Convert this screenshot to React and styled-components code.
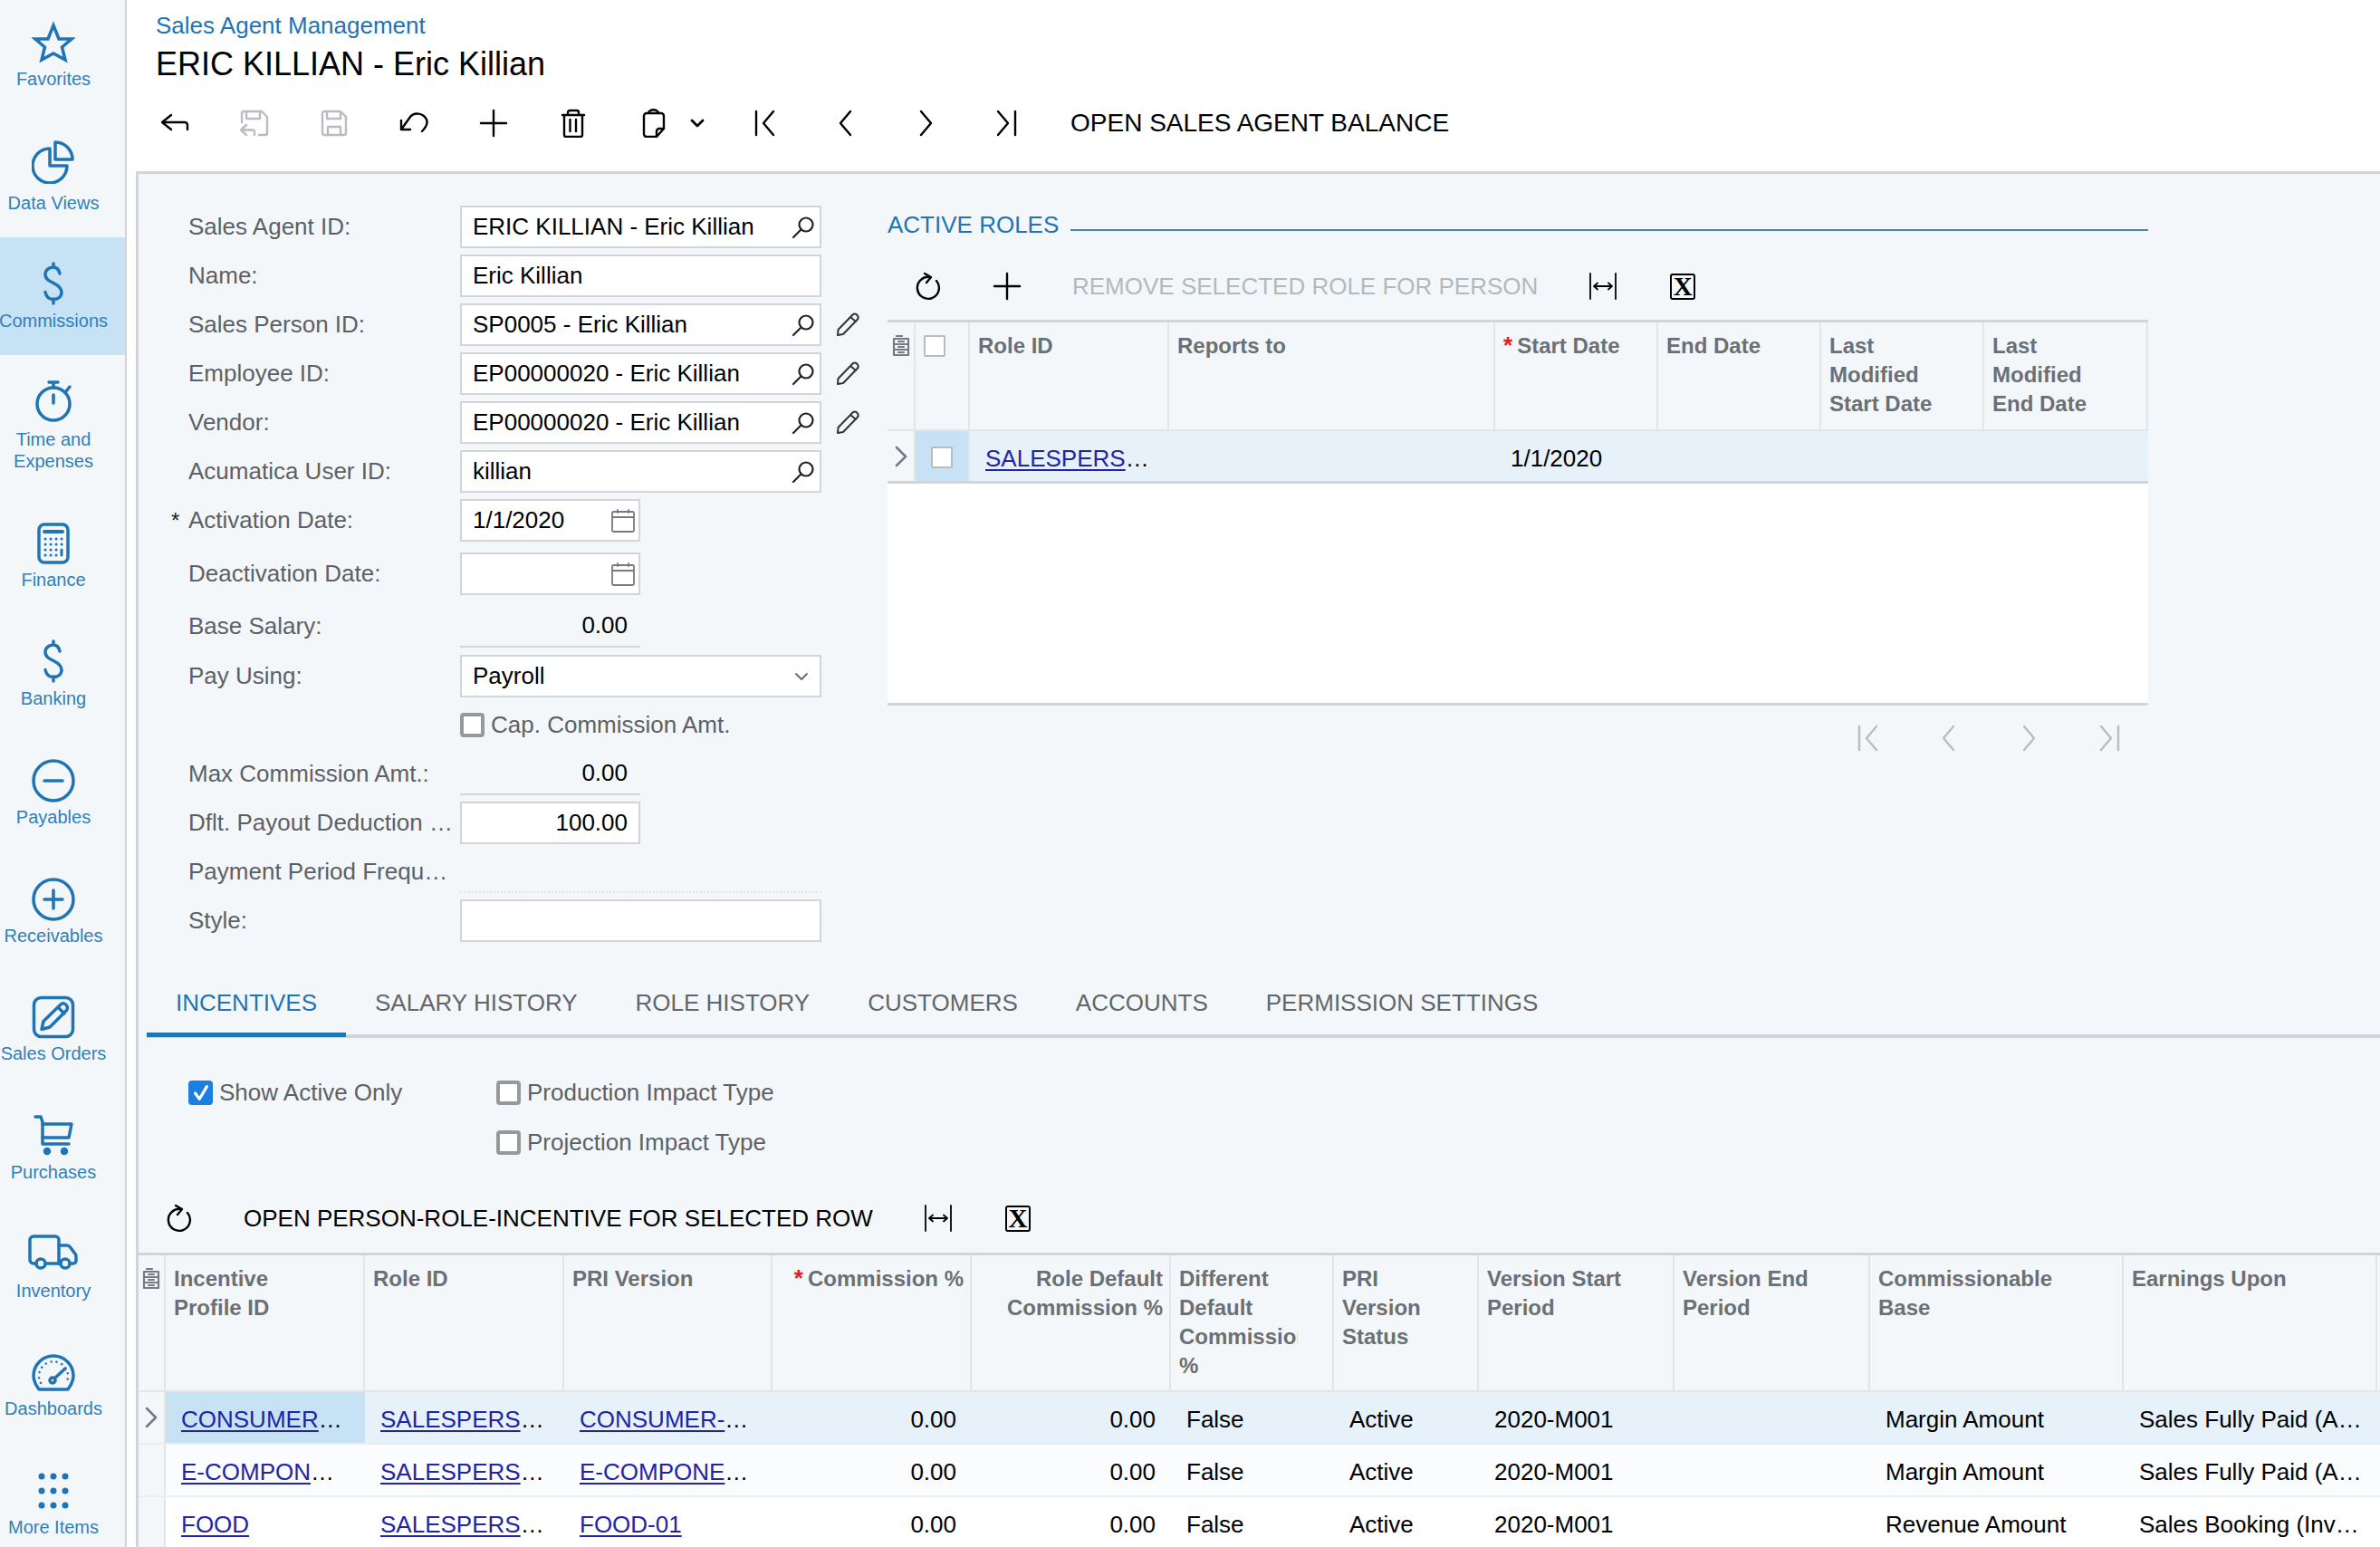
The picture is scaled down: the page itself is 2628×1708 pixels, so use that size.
import React from 'react';
import styled, { createGlobalStyle } from 'styled-components';

const BLUE = '#1f74b5';
const LINE = '#d2d4d9';
const PANEL = '#f4f7f9';

const Global = createGlobalStyle`
  html, body { margin: 0; padding: 0; background: #fff; overflow: hidden; }
  * { box-sizing: border-box; }
  body { font-family: "Liberation Sans", Arial, sans-serif; font-size: 26px; color: #000; }
`;

const Page = styled.div`display: flex; width: 2628px; height: 1708px; overflow: hidden; background: #fff;`;
const Sidebar = styled.nav`width: 140px; flex: none; height: 1708px; background: ${PANEL}; border-right: 2px solid ${LINE}; overflow: hidden;`;
const NavItem = styled.div`
  height: ${p => p.$h}px; display: flex; flex-direction: column; align-items: center; justify-content: flex-end;
  padding: 0 20px 26px 0; background: ${p => (p.$active ? '#c8e2f5' : 'transparent')};
`;
const NavIcon = styled.svg`
  display: block; flex: none; height: 48px; width: ${p => p.$w || 48}px; margin-bottom: ${p => p.$gap ?? 4}px;
  fill: none; color: ${BLUE}; stroke: ${BLUE}; stroke-width: 3.5; stroke-linecap: round; stroke-linejoin: round;
`;
const NavLabel = styled.div`font-size: 20px; line-height: 24px; color: #2f80bb; text-align: center; white-space: nowrap;`;

const Main = styled.main`flex: 1; min-width: 0; padding-left: 10px; display: flex; flex-direction: column;`;
const Header = styled.header`height: 189px; flex: none; padding-top: 12px;`;
const Crumb = styled.div`padding-left: 22px; font-size: 26px; line-height: 32px; color: ${BLUE};`;
const Title = styled.h1`margin: 5px 0 11px; padding-left: 22px; font-size: 36px; font-weight: 400; line-height: 44px;`;
const Toolbar = styled.div`display: flex; align-items: center; height: 64px; margin-left: ${p => p.$ml || 0}px;`;
const ToolIcon = styled.button`
  all: unset; box-sizing: border-box; display: flex; align-items: center; justify-content: center; flex: none;
  width: ${p => p.$w || 88}px; height: 64px; gap: ${p => p.$gap || 0}px; padding-left: ${p => p.$pl || 0}px;
  color: ${p => (p.$off ? '#b9bcc0' : '#000')};
`;
const ToolText = styled.div`
  padding: 0 28px; font-size: ${p => (p.$lg ? 28 : 26)}px; white-space: nowrap; color: ${p => (p.$off ? '#b5b8bb' : '#000')};
`;
const Glyph = styled.svg`
  display: block; flex: none; width: ${p => p.$s || 32}px; height: ${p => p.$h || p.$s || 32}px; fill: none; stroke: currentColor;
  stroke-width: ${p => p.$sw || 2.4}; stroke-linecap: round; stroke-linejoin: round;
`;
const ExcelBox = styled.span`
  display: flex; align-items: center; justify-content: center; width: 28px; height: 29px; border: 2px solid #000; border-radius: 3px;
  font-family: "Liberation Serif", serif; font-weight: 700; font-size: 29px; line-height: 1;
`;

const Panel = styled.section`flex: 1; min-height: 0; background: ${PANEL}; border-top: 3px solid ${LINE}; border-left: 3px solid ${LINE};`;
const Upper = styled.div`display: flex; height: 882px;`;
const Form = styled.div`width: 827px; flex: none; padding: 31px 0 0 55px;`;
const Row = styled.div`display: flex; align-items: center; height: 54px; margin-top: ${p => p.$mt || 0}px;`;
const Label = styled.label`
  width: 292px; margin-right: 8px; padding-top: 1px; flex: none; color: #5c6166; white-space: nowrap; overflow: hidden; text-overflow: ellipsis; font-size: 26px;
`;
const RequiredLabel = styled(Label)`overflow: visible;`;
const Req = styled.span`display: inline-block; width: 19px; margin-left: -19px; color: #222; font-size: 24px;`;
const InputBox = styled.div`
  display: flex; align-items: center; height: 47px; width: ${p => p.$w || 399}px; padding: 1px 12px 0; flex: none;
  background: #fff; border: 2.5px solid ${LINE}; justify-content: ${p => (p.$right ? 'flex-end' : 'space-between')};
`;
const IconSlot = styled.span`display: flex; flex: none; margin-right: ${p => p.$mr || 0}px; color: ${p => p.$color || 'inherit'};`;
const ReadBox = styled.div`
  display: flex; align-items: center; justify-content: flex-end; height: 47px; width: ${p => p.$w || 199}px; padding: 1px 14px 0; flex: none;
  border-bottom: ${p => (p.$dotted ? `2px dotted #e3e5e8` : `2.5px solid ${LINE}`)};
`;
const SideEdit = styled.span`display: flex; margin-left: 15px; color: #333;`;
const CheckLabel = styled.label`display: flex; align-items: center; gap: 7px; color: #5c6166; white-space: nowrap;`;
const Check = styled.span`
  display: flex; align-items: center; justify-content: center; width: ${p => p.$s || 27}px; height: ${p => p.$s || 27}px; flex: none; border-radius: ${p => (p.$thin ? 2 : 4)}px;
  background: ${p => (p.$on ? '#1a7fe0' : '#fff')}; border: ${p => (p.$on ? 'none' : `${p.$thin ? 2.5 : 4}px solid ${p.$thin ? '#b8bbbf' : '#95989d'}`)};
  color: #fff;
`;

const Roles = styled.div`width: 1392px; flex: none; padding-top: 40px;`;
const SectionHead = styled.div`display: flex; align-items: center; gap: 13px; height: 32px; margin-bottom: 20px;`;
const SectionTitle = styled.div`color: ${BLUE}; white-space: nowrap; font-size: 26px;`;
const SectionRule = styled.div`flex: 1; height: 2.5px; margin-top: 12px; background: #4a86ab;`;
const GridWrap = styled.div`margin-top: ${p => p.$mt ?? 5}px; border-top: 3px solid ${LINE};`;
const GridRow = styled.div`
  display: grid; grid-template-columns: ${p => p.$cols}; height: ${p => p.$h}px;
  background: ${p => p.$bg || 'transparent'}; border-bottom: ${p => p.$bw || 2}px solid ${p => p.$bc || '#e6e9ec'};
`;
const HeadCell = styled.div`
  padding: 10px ${p => (p.$right ? 7 : 38)}px 0 9px; border-right: 2px solid #e3e6e9; min-width: 0;
  text-align: ${p => (p.$right ? 'right' : 'left')}; font-size: 24px; font-weight: 700; line-height: 32px; color: #6b7075;
`;
const HeadText = styled.div`overflow: hidden;`;
const GutterCell = styled.div`
  display: flex; justify-content: center; padding-top: ${p => p.$top ?? 0}px; align-items: ${p => (p.$top !== undefined ? 'flex-start' : 'center')};
  border-right: 2px solid #e3e6e9; color: #777b80; background: ${PANEL};
`;
const CheckCell = styled.div`
  display: flex; justify-content: ${p => (p.$head ? 'flex-start' : 'center')}; align-items: ${p => (p.$head ? 'flex-start' : 'center')};
  padding: ${p => (p.$head ? '14px 0 0 9px' : '3px 0 0')};
  background: ${p => (p.$sel ? '#c8e2f5' : 'transparent')}; border-right: 2px solid #e3e6e9;
`;
const Star = styled.span`color: #e02020; margin-right: 5px; font-size: 26px; line-height: 24px;`;
const Cell = styled.div`
  display: block; min-width: 0; padding: 0 17px; line-height: 60px; font-size: 26px; white-space: nowrap; overflow: hidden; text-overflow: ellipsis;
  text-align: ${p => (p.$right ? 'right' : 'left')}; background: ${p => (p.$sel ? '#c8e2f5' : 'transparent')};
`;
const GridLink = styled.a`color: #2323a8; text-decoration: underline; text-underline-offset: 3px;`;
const EmptyArea = styled.div`height: 245px; background: #fff; border-bottom: 3px solid ${LINE};`;
const Pager = styled.div`display: flex; justify-content: flex-end; height: 64px; margin-top: 4px;`;

const TabBar = styled.div`display: flex; height: 72px; margin-left: 9px; border-bottom: 4px solid ${LINE};`;
const Tab = styled.div`
  display: flex; align-items: center; height: 71px; padding: 0 32px; margin-bottom: -4px; white-space: nowrap; font-size: 26px;
  color: ${p => (p.$active ? BLUE : '#62666b')}; border-bottom: 5px solid ${p => (p.$active ? BLUE : 'transparent')};
`;
const Filters = styled.div`display: flex; padding: 33px 0 0 55px; height: 167px;`;
const FilterCol = styled.div`width: ${p => p.$w || 'auto'}; flex: none;`;
const FilterRow = styled.div`display: flex; align-items: center; height: 55px;`;

const CabinetIcon = () => (
  <Glyph viewBox="0 0 20 24" $s={20} $h={24} $sw={2.2}>
    <path d="M5 1h6M2 4h16v18H2zM2 10h16M2 16h16M7 7h6M7 13h6M7 19h6" />
  </Glyph>
);
const Chevron = () => (
  <Glyph viewBox="0 0 24 24" $s={24} $sw={2.6}><path d="M7 2l10 10L7 22" /></Glyph>
);
const ICONS = {
  back: <path d="M12 7L2 15l10 8M2 15h25a3 3 0 0 1 3 3v5" />,
  saveBack: <path d="M2 15V5a2 2 0 0 1 2-2h20l6 6v18a2 2 0 0 1-2 2h-7M7 3v8h15V3M7 18l-6 5.500 6 5.500M1 23.500h13a2 2 0 0 1 2 2V29" />,
  save: <path d="M3 5a2 2 0 0 1 2-2h18l6 6v18a2 2 0 0 1-2 2H5a2 2 0 0 1-2-2zM8 3v8h15V3M9 29v-9h14v9" />,
  undo: <path d="M2 13v10h10M2 23L12 9C16 4 26 4 30 12C32 17 28 22 25 25" />,
  plus: <path d="M16 2v28M2 16h28" />,
  trash: <path d="M4 7h24M6 7v22a2 2 0 0 0 2 2h16a2 2 0 0 0 2-2V7M10 7V4a2 2 0 0 1 2-2h8a2 2 0 0 1 2 2v3M12.500 12v13M19 12v13" />,
  note: <path d="M27 22V8a3 3 0 0 0-3-3H8a3 3 0 0 0-3 3v20a3 3 0 0 0 3 3h11zM27 22h-5a3 3 0 0 0-3 3v6M10 5c0-5 11-5 11 0" />,
  first: <path d="M5 3v26M24 3L13 16l11 13" />,
  prev: <path d="M21 3L10 16l11 13" />,
  next: <path d="M11 3l11 13-11 13" />,
  last: <path d="M27 3v26M8 3l11 13L8 29" />,
  refresh: <path d="M19 6A12 12 0 1 0 26 10M13 2l7 4-5 6" />,
  fit: <path d="M2 2v28M30 2v28M6 16h20M10 12.500L6 16l4 3.500M22 12.500l4 3.500-4 3.500" />,
};
const Ico = ({ n, s, sw }) => <Glyph viewBox="0 0 32 32" $s={s} $sw={sw}>{ICONS[n]}</Glyph>;
const Excel = () => <ExcelBox>X</ExcelBox>;

const Search = () => (
  <IconSlot $mr={-7} $color="#222">
    <Glyph viewBox="0 0 26 26" $s={26} $sw={2.2}><circle cx="16" cy="10" r="7.500" /><path d="M10.500 15.500L2 24" /></Glyph>
  </IconSlot>
);
const Calendar = () => (
  <IconSlot $mr={-9} $color="#777b80">
    <Glyph viewBox="0 0 28 28" $s={28} $sw={1.8}>
      <path d="M2 5.500a1.500 1.500 0 0 1 1.500-1.500h21A1.500 1.500 0 0 1 26 5.500v19a1.500 1.500 0 0 1-1.500 1.500h-21A1.500 1.500 0 0 1 2 24.500zM2 10h24M8 2v3M20 2v3" />
    </Glyph>
  </IconSlot>
);
const Pencil = () => (
  <Glyph viewBox="0 0 28 28" $s={28} $sw={2}><path d="M20 3c2-1 4 0 5 1.500s1 3-.5 4.500L9 25l-6 1 .5-6zM17 6l6 5" /></Glyph>
);
const Caret = ({ sw }) => (
  <Glyph viewBox="0 0 16 16" $s={16} $sw={sw || 1.8}><path d="M2 5l6 6 6-6" /></Glyph>
);
const Tick = () => (
  <Glyph viewBox="0 0 24 24" $s={22} $sw={3.500}><path d="M5 12l5 7 9-15" /></Glyph>
);

const DOLLAR = <path d="M31 13c-1-5-3.500-7-7.500-7S15 9 15 14s4 7 9 9.500 9 5 9 10-4 8-9 8-8-3-9-8M24 2v4M24 41v5" />;
const NAV = [
  { h: 125, label: 'Favorites', icon: <path strokeLinejoin="miter" d="M24 5l6 15 14 0-10.500 9L37 43 24 36 11 43l3.500-14L4 20l14 0z" /> },
  { h: 137, gap: 9, label: 'Data Views', icon: <><path d="M20 9a19 19 0 1 0 19 19H20z" /><path d="M26 2a19 19 0 0 1 19 19H26z" /></> },
  { h: 130, gap: 5, active: true, label: 'Commissions', icon: DOLLAR },
  { h: 155, gap: 6, label: <>Time and<br />Expenses</>, icon: <><circle cx="24" cy="27" r="18" /><path d="M24 3v6M19 3h10M38 13l4-5M24 17v9" /></> },
  { h: 131, label: 'Finance', icon: <><rect x="8" y="3" width="32" height="42" rx="6" /><path d="M14 11h20" strokeWidth="4" /><path d="M15 19h.1M21 19h.1M27 19h.1M33 19h.1M15 25h.1M21 25h.1M27 25h.1M33 25h.1M15 31h.1M21 31h.1M27 31h.1M15 37h.1M21 37h.1M27 37h.1M33 31v6" strokeWidth="3" /></> },
  { h: 131, gap: 5, label: 'Banking', icon: DOLLAR },
  { h: 131, label: 'Payables', icon: <><circle cx="24" cy="24" r="22" /><path d="M14 24h20" /></> },
  { h: 131, label: 'Receivables', icon: <><circle cx="24" cy="24" r="22" /><path d="M14 24h20M24 14v20" /></> },
  { h: 130, label: 'Sales Orders', icon: <><rect x="2.500" y="2.500" width="43" height="43" rx="8" /><path d="M32 10c2-2 4-1.500 6 .5s2 4 .5 6L20 35l-9 2.500 2-9zM29 13l7 7" /></> },
  { h: 131, label: 'Purchases', icon: <><path d="M4 3h6l2 6v24h29" /><path d="M12 11h32l-3 15H12" /><circle cx="17" cy="41" r="2.500" fill="currentColor" /><circle cx="36" cy="41" r="2.500" fill="currentColor" /></> },
  { h: 131, w: 56, label: 'Inventory', icon: <><path d="M9 34H6a4 4 0 0 1-4-4V8a4 4 0 0 1 4-4h24a4 4 0 0 1 4 4v26H19" /><path d="M34 14h9c1.500 0 2.500.5 3.500 2l6 8c.5 1 .5 1.500.5 3v4a3 3 0 0 1-3 3h-4M34 34h2" /><circle cx="14" cy="34" r="5" /><circle cx="41" cy="34" r="5" /></> },
  { h: 130, label: 'Dashboards', icon: <><path d="M8 43h32c3-4 6-9 6-15a22 22 0 0 0-44 0c0 6 3 11 6 15z" /><path d="M25 31l12-11" /><circle cx="23" cy="33" r="3" /><path d="M10 36A16 16 0 1 1 38 36" strokeWidth="2.500" strokeDasharray="0.1 6" /></> },
  { h: 131, label: 'More Items', icon: <g fill="#1f74b5" stroke="none"><circle cx="11" cy="8" r="3.500" /><circle cx="24" cy="8" r="3.500" /><circle cx="37" cy="8" r="3.500" /><circle cx="11" cy="24" r="3.500" /><circle cx="24" cy="24" r="3.500" /><circle cx="37" cy="24" r="3.500" /><circle cx="11" cy="40" r="3.500" /><circle cx="24" cy="40" r="3.500" /><circle cx="37" cy="40" r="3.500" /></g> },
];

const ROLE_COLS = '31px 60px 220px 360px 180px 180px 180px 181px';
const INC_COLS = '30px 220px 220px 230px 220px 220px 180px 160px 216px 216px 280px 280px';

const INC_HEAD = [
  ['Incentive Profile ID'], ['Role ID'], ['PRI Version'], ['Commission %', true, true], ['Role Default Commission %', true],
  ['Different Default Commission %'], ['PRI Version Status'], ['Version Start Period'], ['Version End Period'], ['Commissionable Base'], ['Earnings Upon'],
];
const INC_ROWS = [
  ['CONSUMER-PRODUCTS', 'CONSUMER-PRODUCTS-01', 'Margin Amount', 'Sales Fully Paid (AR Payment)', '#e6f1fa', '#e9edf1'],
  ['E-COMPONENTS', 'E-COMPONENTS-01', 'Margin Amount', 'Sales Fully Paid (AR Payment)', '#fafcfd', '#edf0f3'],
  ['FOOD', 'FOOD-01', 'Revenue Amount', 'Sales Booking (Invoice Release)', '#fff', '#edf0f3'],
];

export default function App() {
  return (
    <Page>
      <Global />
      <Sidebar>
        {NAV.map((n, i) => (
          <NavItem key={i} $h={n.h} $active={n.active}>
            <NavIcon viewBox={`0 0 ${n.w || 48} 48`} $w={n.w} $gap={n.gap}>{n.icon}</NavIcon>
            <NavLabel>{n.label}</NavLabel>
          </NavItem>
        ))}
      </Sidebar>
      <Main>
        <Header>
          <Crumb>Sales Agent Management</Crumb>
          <Title>ERIC KILLIAN - Eric Killian</Title>
          <Toolbar $ml={-1}>
            <ToolIcon><Ico n="back" /></ToolIcon>
            <ToolIcon $off><Ico n="saveBack" /></ToolIcon>
            <ToolIcon $off><Ico n="save" /></ToolIcon>
            <ToolIcon><Ico n="undo" /></ToolIcon>
            <ToolIcon><Ico n="plus" /></ToolIcon>
            <ToolIcon><Ico n="trash" /></ToolIcon>
            <ToolIcon $w={125} $gap={24} $pl={4}><Ico n="note" /><Caret sw={2.8} /></ToolIcon>
            <ToolIcon><Ico n="first" /></ToolIcon>
            <ToolIcon><Ico n="prev" /></ToolIcon>
            <ToolIcon><Ico n="next" /></ToolIcon>
            <ToolIcon><Ico n="last" /></ToolIcon>
            <ToolText $lg>OPEN SALES AGENT BALANCE</ToolText>
          </Toolbar>
        </Header>
        <Panel>
          <Upper>
            <Form>
              <Row><Label>Sales Agent ID:</Label><InputBox>ERIC KILLIAN - Eric Killian<Search /></InputBox></Row>
              <Row><Label>Name:</Label><InputBox>Eric Killian</InputBox></Row>
              <Row><Label>Sales Person ID:</Label><InputBox>SP0005 - Eric Killian<Search /></InputBox><SideEdit><Pencil /></SideEdit></Row>
              <Row><Label>Employee ID:</Label><InputBox>EP00000020 - Eric Killian<Search /></InputBox><SideEdit><Pencil /></SideEdit></Row>
              <Row><Label>Vendor:</Label><InputBox>EP00000020 - Eric Killian<Search /></InputBox><SideEdit><Pencil /></SideEdit></Row>
              <Row><Label>Acumatica User ID:</Label><InputBox>killian<Search /></InputBox></Row>
              <Row><RequiredLabel><Req>*</Req>Activation Date:</RequiredLabel><InputBox $w={199}>1/1/2020<Calendar /></InputBox></Row>
              <Row $mt={5}><Label>Deactivation Date:</Label><InputBox $w={199} $right><Calendar /></InputBox></Row>
              <Row $mt={4}><Label>Base Salary:</Label><ReadBox>0.00</ReadBox></Row>
              <Row $mt={1}><Label>Pay Using:</Label><InputBox>Payroll<IconSlot $color="#666"><Caret /></IconSlot></InputBox></Row>
              <Row><Label /><CheckLabel><Check />Cap. Commission Amt.</CheckLabel></Row>
              <Row><Label>Max Commission Amt.:</Label><ReadBox>0.00</ReadBox></Row>
              <Row><Label>Dflt. Payout Deduction %:</Label><InputBox $w={199} $right>100.00</InputBox></Row>
              <Row><Label>Payment Period Frequency:</Label><ReadBox $w={399} $dotted /></Row>
              <Row><Label>Style:</Label><InputBox /></Row>
            </Form>
            <Roles>
              <SectionHead><SectionTitle>ACTIVE ROLES</SectionTitle><SectionRule /></SectionHead>
              <Toolbar>
                <ToolIcon><Ico n="refresh" /></ToolIcon>
                <ToolIcon><Ico n="plus" /></ToolIcon>
                <ToolText $off>REMOVE SELECTED ROLE FOR PERSON</ToolText>
                <ToolIcon><Ico n="fit" sw={1.800} /></ToolIcon>
                <ToolIcon><Excel /></ToolIcon>
              </Toolbar>
              <GridWrap>
                <GridRow $cols={ROLE_COLS} $h={120} $bc="#e3e6e9">
                  <GutterCell $top={14}><CabinetIcon /></GutterCell>
                  <CheckCell $head><Check $s={24} $thin /></CheckCell>
                  <HeadCell><HeadText>Role ID</HeadText></HeadCell>
                  <HeadCell><HeadText>Reports to</HeadText></HeadCell>
                  <HeadCell><HeadText><Star>*</Star>Start Date</HeadText></HeadCell>
                  <HeadCell><HeadText>End Date</HeadText></HeadCell>
                  <HeadCell><HeadText>Last Modified Start Date</HeadText></HeadCell>
                  <HeadCell><HeadText>Last Modified End Date</HeadText></HeadCell>
                </GridRow>
                <GridRow $cols={ROLE_COLS} $h={58} $bw={3} $bc={LINE} $bg="#e6f1fa">
                  <GutterCell><Chevron /></GutterCell>
                  <CheckCell $sel><Check $s={24} $thin /></CheckCell>
                  <Cell><GridLink>SALESPERSON</GridLink></Cell>
                  <Cell />
                  <Cell>1/1/2020</Cell>
                  <Cell /><Cell /><Cell />
                </GridRow>
                <EmptyArea />
              </GridWrap>
              <Pager>
                <ToolIcon $off><Ico n="first" /></ToolIcon>
                <ToolIcon $off><Ico n="prev" /></ToolIcon>
                <ToolIcon $off><Ico n="next" /></ToolIcon>
                <ToolIcon $off><Ico n="last" /></ToolIcon>
              </Pager>
            </Roles>
          </Upper>
          <TabBar>
            <Tab $active>INCENTIVES</Tab>
            <Tab>SALARY HISTORY</Tab>
            <Tab>ROLE HISTORY</Tab>
            <Tab>CUSTOMERS</Tab>
            <Tab>ACCOUNTS</Tab>
            <Tab>PERMISSION SETTINGS</Tab>
          </TabBar>
          <Filters>
            <FilterCol $w="340px">
              <FilterRow><CheckLabel><Check $on><Tick /></Check>Show Active Only</CheckLabel></FilterRow>
            </FilterCol>
            <FilterCol>
              <FilterRow><CheckLabel><Check />Production Impact Type</CheckLabel></FilterRow>
              <FilterRow><CheckLabel><Check />Projection Impact Type</CheckLabel></FilterRow>
            </FilterCol>
          </Filters>
          <Toolbar>
            <ToolIcon><Ico n="refresh" /></ToolIcon>
            <ToolText>OPEN PERSON-ROLE-INCENTIVE FOR SELECTED ROW</ToolText>
            <ToolIcon><Ico n="fit" sw={1.800} /></ToolIcon>
            <ToolIcon><Excel /></ToolIcon>
          </Toolbar>
          <GridWrap $mt={6}>
            <GridRow $cols={INC_COLS} $h={151} $bc="#e3e6e9">
              <GutterCell $top={14}><CabinetIcon /></GutterCell>
              {INC_HEAD.map(([t, right, req], i) => (
                <HeadCell key={i} $right={right}><HeadText>{req && <Star>*</Star>}{t}</HeadText></HeadCell>
              ))}
            </GridRow>
            {INC_ROWS.map(([a, c, base, earn, bg, bc], i) => (
              <GridRow key={i} $cols={INC_COLS} $h={58} $bg={bg} $bc={bc}>
                <GutterCell>{i === 0 && <Chevron />}</GutterCell>
                <Cell $sel={i === 0}><GridLink>{a}</GridLink></Cell>
                <Cell><GridLink>SALESPERSON</GridLink></Cell>
                <Cell><GridLink>{c}</GridLink></Cell>
                <Cell $right>0.00</Cell>
                <Cell $right>0.00</Cell>
                <Cell>False</Cell>
                <Cell>Active</Cell>
                <Cell>2020-M001</Cell>
                <Cell />
                <Cell>{base}</Cell>
                <Cell>{earn}</Cell>
              </GridRow>
            ))}
          </GridWrap>
        </Panel>
      </Main>
    </Page>
  );
}
